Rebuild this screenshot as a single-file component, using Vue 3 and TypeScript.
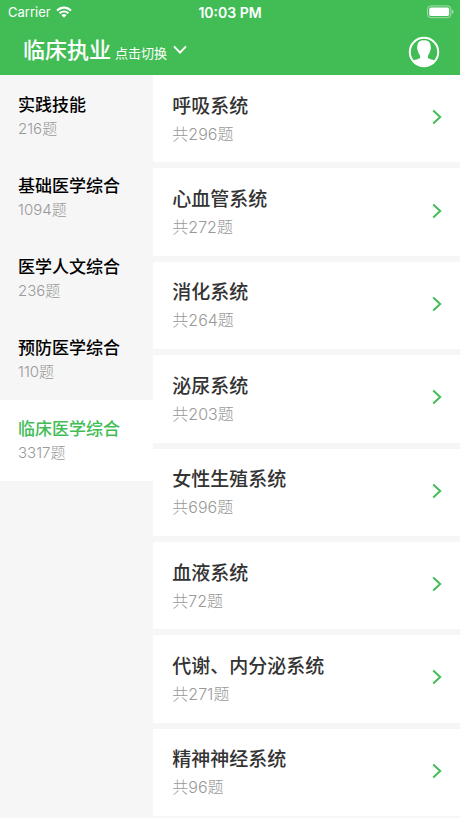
<script setup lang="ts">
import { ref } from 'vue'

interface Entry {
  name: string
  count: number
}

const subjects: Entry[] = [
  { name: '实践技能', count: 216 },
  { name: '基础医学综合', count: 1094 },
  { name: '医学人文综合', count: 236 },
  { name: '预防医学综合', count: 110 },
  { name: '临床医学综合', count: 3317 },
]

const chapters: Entry[] = [
  { name: '呼吸系统', count: 296 },
  { name: '心血管系统', count: 272 },
  { name: '消化系统', count: 264 },
  { name: '泌尿系统', count: 203 },
  { name: '女性生殖系统', count: 696 },
  { name: '血液系统', count: 72 },
  { name: '代谢、内分泌系统', count: 271 },
  { name: '精神神经系统', count: 96 },
]

const selected = ref(4)
</script>

<template>
  <div class="page">
    <header class="header">
      <div class="status">
        <span class="carrier">
          Carrier
          <svg class="wifi" viewBox="0 0 16 12" aria-hidden="true">
            <path d="M0.3 3.8 C4.6 -0.7 11.4 -0.7 15.7 3.8 L14.2 5.4 C10.7 1.9 5.3 1.9 1.8 5.4 Z" />
            <path d="M2.9 6.5 C5.7 3.7 10.3 3.7 13.1 6.5 L11.6 8 C9.6 6.1 6.4 6.1 4.4 8 Z" />
            <path d="M5.4 9.1 C6.9 7.7 9.1 7.7 10.6 9.1 L8 11.8 Z" />
          </svg>
        </span>
        <span class="time">10:03 PM</span>
        <svg class="battery" viewBox="0 0 27 14" aria-hidden="true">
          <rect class="shell" x="0.5" y="0.9" width="23.4" height="11.8" rx="3.4" />
          <rect x="2.2" y="2.6" width="20" height="8.4" rx="1.8" />
          <path class="tip" d="M25 4.8 C27 5.4 27 8.2 25 8.8 Z" />
        </svg>
      </div>
      <div class="bar">
        <button class="switch" type="button">
          <span class="course">临床执业</span>
          <span class="hint">点击切换</span>
          <svg class="down" viewBox="0 0 14 10" aria-hidden="true">
            <path d="M1 1.4 L7 7.6 L13 1.4" />
          </svg>
        </button>
        <button class="profile" type="button" aria-label="个人中心">
          <svg viewBox="0 0 32 32" aria-hidden="true">
            <circle class="ring" cx="16" cy="16" r="14.2" />
            <path d="M16 4.2 C20.6 4.2 22.9 6.8 22.7 10.8 C23.2 11.4 22.9 13.8 22.1 14.8 C21.7 17 20.9 18.4 19.9 19.4 V21.4 C20.4 23 23.5 23 27.2 24.8 C24.8 28.6 20.8 30.5 16 30.5 S7.2 28.6 4.8 24.8 C8.5 23 11.6 23 12.1 21.4 V19.4 C11.1 18.4 10.3 17 9.9 14.8 C9.1 13.8 8.8 11.4 9.3 10.8 C9.1 6.8 11.4 4.2 16 4.2 Z" />
          </svg>
        </button>
      </div>
    </header>
    <div class="content">
      <nav class="subjects">
        <button
          v-for="(subject, index) in subjects"
          :key="subject.name"
          class="subject"
          :class="{ active: index === selected }"
          type="button"
          @click="selected = index"
        >
          <span class="subject-name">{{ subject.name }}</span>
          <span class="subject-count">{{ subject.count }}题</span>
        </button>
      </nav>
      <main class="chapters">
        <a v-for="chapter in chapters" :key="chapter.name" class="chapter" href="#">
          <span class="chapter-text">
            <span class="chapter-name">{{ chapter.name }}</span>
            <span class="chapter-count">共{{ chapter.count }}题</span>
          </span>
          <svg class="arrow" viewBox="0 0 10 16" aria-hidden="true">
            <path d="M1.2 1.4 L8.2 8 L1.2 14.6" />
          </svg>
        </a>
      </main>
    </div>
  </div>
</template>

<style>
body {
  margin: 0;
  background: #f6f6f6;
}
</style>

<style scoped>
.page {
  display: flex;
  flex-direction: column;
  min-height: 100vh;
  font-family: Inter, "Noto Sans CJK SC", sans-serif;
}

button {
  margin: 0;
  padding: 0;
  border: 0;
  background: none;
  font: inherit;
  color: inherit;
  text-align: left;
  cursor: pointer;
}

svg {
  display: block;
  fill: currentColor;
}

.header {
  background: #42bd56;
  color: #fff;
}

.status {
  display: grid;
  grid-template-columns: 1fr auto 1fr;
  align-items: center;
  height: 24px;
  padding: 0 6px;
  font-size: 13px;
}

.carrier {
  display: flex;
  align-items: center;
  gap: 5px;
  padding-left: 2px;
}

.wifi {
  width: 16px;
  height: 12px;
}

.time {
  font-size: 14px;
  font-weight: 600;
}

.battery {
  justify-self: end;
  width: 27px;
  height: 14px;
}

.shell {
  fill: none;
  stroke: currentColor;
  opacity: 0.5;
}

.tip {
  opacity: 0.5;
}

.bar {
  display: flex;
  align-items: flex-end;
  justify-content: space-between;
  height: 44px;
  padding: 0 20px 7px 23px;
}

.switch {
  display: flex;
  align-items: baseline;
  gap: 4px;
}

.course {
  font-size: 22px;
  line-height: 36px;
  font-weight: 500;
}

.hint {
  font-size: 13px;
}

.down {
  align-self: center;
  width: 14px;
  height: 10px;
  margin-left: 2px;
}

.down path,
.arrow path {
  fill: none;
  stroke: currentColor;
  stroke-width: 2;
}

.profile svg {
  width: 32px;
  height: 32px;
}

.ring {
  fill: none;
  stroke: currentColor;
  stroke-width: 2;
}

.content {
  flex: 1;
  display: grid;
  grid-template-columns: 1fr 2fr;
}

.subjects {
  display: flex;
  flex-direction: column;
  padding-top: 1px;
}

.subject {
  display: flex;
  flex-direction: column;
  justify-content: center;
  height: 81px;
  padding: 1px 0 0 18px;
}

.subject.active {
  background: #fff;
}

.subject-name {
  font-size: 17px;
  line-height: 24px;
  font-weight: 500;
  color: #000;
}

.active .subject-name {
  color: #42bd56;
}

.subject-count {
  font-size: 15px;
  line-height: 24px;
  font-weight: 300;
  color: #999;
}

.chapters {
  display: grid;
  grid-auto-rows: minmax(87px, 1fr);
  gap: 6px;
  padding-bottom: 2px;
}

.chapter {
  display: flex;
  align-items: center;
  justify-content: space-between;
  padding: 0 18px 3px 19px;
  background: #fff;
  text-decoration: none;
}

.chapter-text {
  display: flex;
  flex-direction: column;
  padding-top: 5px;
}

.chapter-name {
  font-size: 19px;
  line-height: 28px;
  font-weight: 500;
  color: #333;
}

.chapter-count {
  font-size: 16px;
  line-height: 26px;
  font-weight: 300;
  color: #999;
}

.arrow {
  width: 10px;
  height: 16px;
  color: #42bd56;
}
</style>
